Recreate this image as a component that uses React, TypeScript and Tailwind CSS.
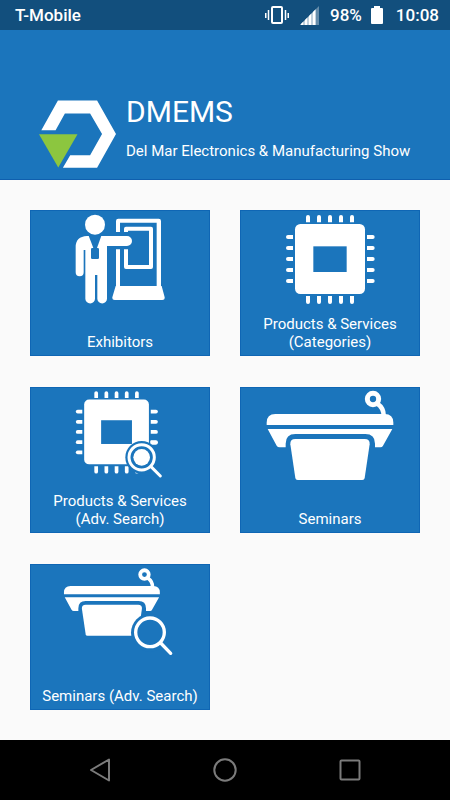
import type { ReactNode } from "react";

type Tile = {
  label: string[];
  icon: ReactNode;
};

const BLUE = "#1b75bc";

function TileIcon({ children }: { children: ReactNode }) {
  return (
    <svg viewBox="15 15 540 300" className="h-[100px] w-[180px] max-w-full" fill="white" aria-hidden="true">
      {children}
    </svg>
  );
}

function ExhibitorIcon() {
  return (
    <TileIcon>
      {/* Stand */}
      <path
        d="M273 81V48q0-7 7-7h121q7 0 7 7v195h2l9 34q1 8-7 8H269q-8 0-7-8l10-34h1V133h12v110h110V53H285v28z"
      />
      <path d="M297 81V71q0-6 6-6h75q6 0 6 6v115q0 6-6 6h-75q-6 0-6-6v-53h12v47h63V77h-63v4z" />
      {/* Person */}
      <circle cx="210" cy="59" r="30" />
      <path d="M186 93h8l13 32h6l14-32h79a15 15 0 0 1 0 30h-60v158a14.500 14.500 0 0 1-29 0V210h-7v71a14.500 14.500 0 0 1-29 0V135h-5v67a12 12 0 0 1-24 0v-76q0-31 34-33z" />
      <path d="M191 92h38l-13 37h-11z" fill={BLUE} />
      <rect x="198" y="129" width="24" height="33" rx="4" fill={BLUE} />
    </TileIcon>
  );
}

function Chip() {
  const offsets = [0, 33, 66, 99, 132];
  return (
    <>
      <rect x="180" y="57" width="210" height="210" rx="16" />
      <rect x="235" y="124" width="100" height="77" fill={BLUE} />
      {offsets.map((o) => (
        <g key={o}>
          <path d={`M${213 + o} 52v-16a6 6 0 0 1 12 0v16z`} />
          <path d={`M${213 + o} 273v18a6 6 0 0 0 12 0v-18z`} />
          <path d={`M174 ${90 + o}h-15a6 6 0 0 0 0 12h15z`} />
          <path d={`M396 ${90 + o}h17a6 6 0 0 1 0 12h-17z`} />
        </g>
      ))}
    </>
  );
}

function ChipIcon() {
  return (
    <TileIcon>
      <Chip />
    </TileIcon>
  );
}

function ChipSearchIcon() {
  return (
    <TileIcon>
      <g transform="translate(11 0) scale(0.925)">
        <Chip />
      </g>
      <path d="M345 250h66v30h-66zM378 190h30v55h-30z" fill={BLUE} />
      <path d="M376 176h16a6 6 0 0 1 0 12h-16z" />
      <circle cx="350" cy="226" r="49" fill={BLUE} />
      <circle cx="350" cy="226" r="38" fill="none" stroke="white" strokeWidth="9" />
      <circle cx="350" cy="226" r="25" />
      <path d="M378 254l28 28" stroke="white" strokeWidth="9" strokeLinecap="round" />
    </TileIcon>
  );
}

function Podium() {
  return (
    <>
      <circle cx="414" cy="51" r="17" fill="none" stroke="white" strokeWidth="15" />
      <path d="M427 65Q446 78 446 101" fill="none" stroke="white" strokeWidth="14" />
      <path d="M95 129v-7q0-26 26-26h328q26 0 26 26v7z" />
      <path d="M98 141h374l-28 50q-2 5-8 5h-16v-11q0-29-29-29H181q-29 0-29 29v11h-18q-6 0-9-5z" />
      <path d="M181 171h208q16 0 15 16l-15 101q-1 6-7 6H188q-6 0-7-6l-15-101q-1-16 15-16z" />
    </>
  );
}

function PodiumIcon() {
  return (
    <TileIcon>
      <Podium />
    </TileIcon>
  );
}

function PodiumSearchIcon() {
  return (
    <TileIcon>
      <g transform="translate(45 8) scale(0.757)">
        <Podium />
      </g>
      <circle cx="375" cy="221" r="57" fill={BLUE} />
      <circle cx="375" cy="220" r="43" fill="none" stroke="white" strokeWidth="10" />
      <path d="M407 252l30 31" stroke="white" strokeWidth="10" strokeLinecap="round" />
    </TileIcon>
  );
}

const tiles: Tile[] = [
  { label: ["Exhibitors"], icon: <ExhibitorIcon /> },
  { label: ["Products & Services", "(Categories)"], icon: <ChipIcon /> },
  { label: ["Products & Services", "(Adv. Search)"], icon: <ChipSearchIcon /> },
  { label: ["Seminars"], icon: <PodiumIcon /> },
  { label: ["Seminars (Adv. Search)"], icon: <PodiumSearchIcon /> },
];

function StatusBar() {
  return (
    <div className="flex h-[30px] items-center bg-[#124f7d] pr-[11px] pl-[15px] text-[17px] leading-5 font-medium text-white">
      <span className="mr-auto">T-Mobile</span>
      <svg width="24" height="20" viewBox="0 0 24 20" fill="none" stroke="white" className="mr-[11px]" aria-hidden="true">
        <rect x="7" y="2" width="10" height="16" rx="1" strokeWidth="2" />
        <path d="M3.500 5v10M20.500 5v10" strokeWidth="1.500" />
        <path d="M.75 8v5M23.250 8v5" strokeWidth="1.500" />
      </svg>
      <svg width="19" height="20" viewBox="0 0 19 20" className="mr-[11px]" aria-hidden="true">
        <path d="M0 20L19 1v19z" fill="#fff" opacity="0.35" />
        <path d="M0 20L16 4v16z" fill="#fff" opacity="0.6" />
        <path d="M1 20v-1l2-2v3zM5 20v-5l2-2v7zM9 20v-9l2-2v11zM13 20V7l2-2v15z" fill="#fff" />
      </svg>
      <span className="mr-[9px]">98%</span>
      <svg width="12" height="18" viewBox="0 0 12 18" fill="white" className="mr-[13px]" aria-hidden="true">
        <path d="M3 0h6v2h2q1 0 1 1v14q0 1-1 1H1q-1 0-1-1V3q0-1 1-1h2z" />
      </svg>
      <span>10:08</span>
    </div>
  );
}

function Header() {
  return (
    <header className="flex h-[150px] items-end gap-[10px] border-b border-[#0f5fae] bg-[#1b75bc] pb-[11px] pl-[39px] text-white">
      <svg viewBox="57 47 232 204" className="h-[68px] w-[77px] shrink-0" aria-hidden="true">
        <path d="M114 48h118l57 101-57 102H129l22-38h60l36-64-36-62h-76l-28 51H64z" fill="white" />
        <path d="M57 150h116l-58 100z" fill="#8cc63f" />
      </svg>
      <div className="pb-[7px]">
        <h1 className="text-[30px] leading-9">DMEMS</h1>
        <p className="mt-[11px] text-[15px] leading-5">Del Mar Electronics &amp; Manufacturing Show</p>
      </div>
    </header>
  );
}

function NavBar() {
  return (
    <nav className="flex h-[60px] items-center justify-center gap-[101px] bg-black text-[#7b7b7b]">
      <button aria-label="Back">
        <svg width="24" height="24" viewBox="0 0 24 24" fill="none" stroke="currentColor" strokeWidth="2" strokeLinejoin="round">
          <path d="M3 12L21 1.500v21z" />
        </svg>
      </button>
      <button aria-label="Home">
        <svg width="24" height="24" viewBox="0 0 24 24" fill="none" stroke="currentColor" strokeWidth="2">
          <circle cx="12" cy="12" r="10.700" />
        </svg>
      </button>
      <button aria-label="Recent apps">
        <svg width="24" height="24" viewBox="0 0 24 24" fill="none" stroke="currentColor" strokeWidth="2">
          <rect x="2.500" y="2.500" width="19" height="19" rx="1" />
        </svg>
      </button>
    </nav>
  );
}

export default function App() {
  return (
    <div className="flex min-h-screen flex-col bg-[#fafafa] font-[Roboto,sans-serif]">
      <StatusBar />
      <Header />
      <main className="grid flex-1 grid-cols-2 content-start gap-x-[30px] gap-y-[31px] p-[30px] pb-[29px]">
        {tiles.map((tile) => (
          <button
            key={tile.label.join(" ")}
            className="flex flex-col items-center bg-[#1b75bc] pb-[5px] text-[15px] leading-[18px] text-white ring-1 ring-[#0f66b4] ring-inset"
          >
            {tile.icon}
            <span className="mt-[5px] flex min-h-9 flex-col justify-end">
              {tile.label.map((line) => (
                <span key={line}>{line}</span>
              ))}
            </span>
          </button>
        ))}
      </main>
      <NavBar />
    </div>
  );
}
